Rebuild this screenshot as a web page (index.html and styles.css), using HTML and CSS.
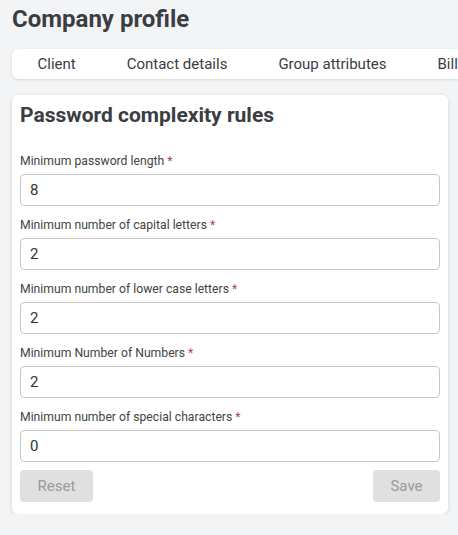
FILE: index.html
```html
<!DOCTYPE html>
<html lang="en">
<head>
<meta charset="utf-8">
<title>Company profile</title>
<link rel="stylesheet" href="styles.css">
</head>
<body>
<div class="page">
  <h1 class="page-title">Company profile</h1>
  <nav class="tabs">
    <span class="tab">Client</span>
    <span class="tab">Contact details</span>
    <span class="tab">Group attributes</span>
    <span class="tab">Bill</span>
  </nav>
  <section class="card">
    <h2 class="card-title">Password complexity rules</h2>
    <div class="field">
      <label class="label">Minimum password length <span class="req">*</span></label>
      <input class="input" type="text" value="8">
    </div>
    <div class="field">
      <label class="label">Minimum number of capital letters <span class="req">*</span></label>
      <input class="input" type="text" value="2">
    </div>
    <div class="field">
      <label class="label">Minimum number of lower case letters <span class="req">*</span></label>
      <input class="input" type="text" value="2">
    </div>
    <div class="field">
      <label class="label">Minimum Number of Numbers <span class="req">*</span></label>
      <input class="input" type="text" value="2">
    </div>
    <div class="field">
      <label class="label">Minimum number of special characters <span class="req">*</span></label>
      <input class="input" type="text" value="0">
    </div>
    <div class="actions">
      <button class="btn btn-reset" type="button">Reset</button>
      <button class="btn btn-save" type="button">Save</button>
    </div>
  </section>
</div>
</body>
</html>
```
FILE: styles.css
```css
* { box-sizing: border-box; }
html, body {
  margin: 0;
  padding: 0;
  background: #f3f4f6;
  font-family: Roboto, "Liberation Sans", sans-serif;
  color: #3a3d42;
  overflow: hidden;
}
.page {
  padding: 5px 10px 0 12px;
  width: 458px;
}
.page-title {
  margin: 0;
  font-size: 24px;
  line-height: 28px;
  font-weight: 700;
  color: #3a3d42;
}
.tabs {
  margin-top: 16px;
  height: 30px;
  background: #fff;
  border-radius: 6px 0 0 6px;
  box-shadow: 0 1px 3px rgba(0,0,0,0.14);
  display: flex;
  align-items: center;
  width: 446px;
  white-space: nowrap;
  overflow: hidden;
}
.tab {
  padding: 0 25.5px;
  font-size: 15px;
  color: #3a3d42;
  line-height: 30px;
}
.card {
  margin-top: 16px;
  width: 436px;
  background: #fff;
  border-radius: 6px;
  box-shadow: 0 1px 4px rgba(0,0,0,0.14);
  padding: 7px 8px 12px 8px;
}
.card-title {
  margin: 0 0 25px 0;
  font-size: 21px;
  line-height: 26px;
  font-weight: 700;
  color: #3a3d42;
}
.field {
  display: flex;
  flex-direction: column;
  margin-bottom: 11px;
}
.label {
  font-size: 12.2px;
  line-height: 16px;
  color: #444;
  margin-bottom: 5px;
}
.req { color: #a8485a; }
.input {
  height: 32px;
  width: 100%;
  border: 1px solid #c8c8c8;
  border-radius: 4px;
  padding: 0 9px;
  font-family: Roboto, "Liberation Sans", sans-serif;
  font-size: 15px;
  color: #333;
  background: #fff;
  outline: none;
}
.actions {
  display: flex;
  justify-content: space-between;
  margin-top: -3px;
}
.btn {
  height: 32px;
  border: none;
  border-radius: 4px;
  background: #e0e0e0;
  color: #9a9a9a;
  font-family: Roboto, "Liberation Sans", sans-serif;
  font-size: 15px;
  padding: 0;
}
.btn-reset { width: 73px; }
.btn-save { width: 67px; }
```
